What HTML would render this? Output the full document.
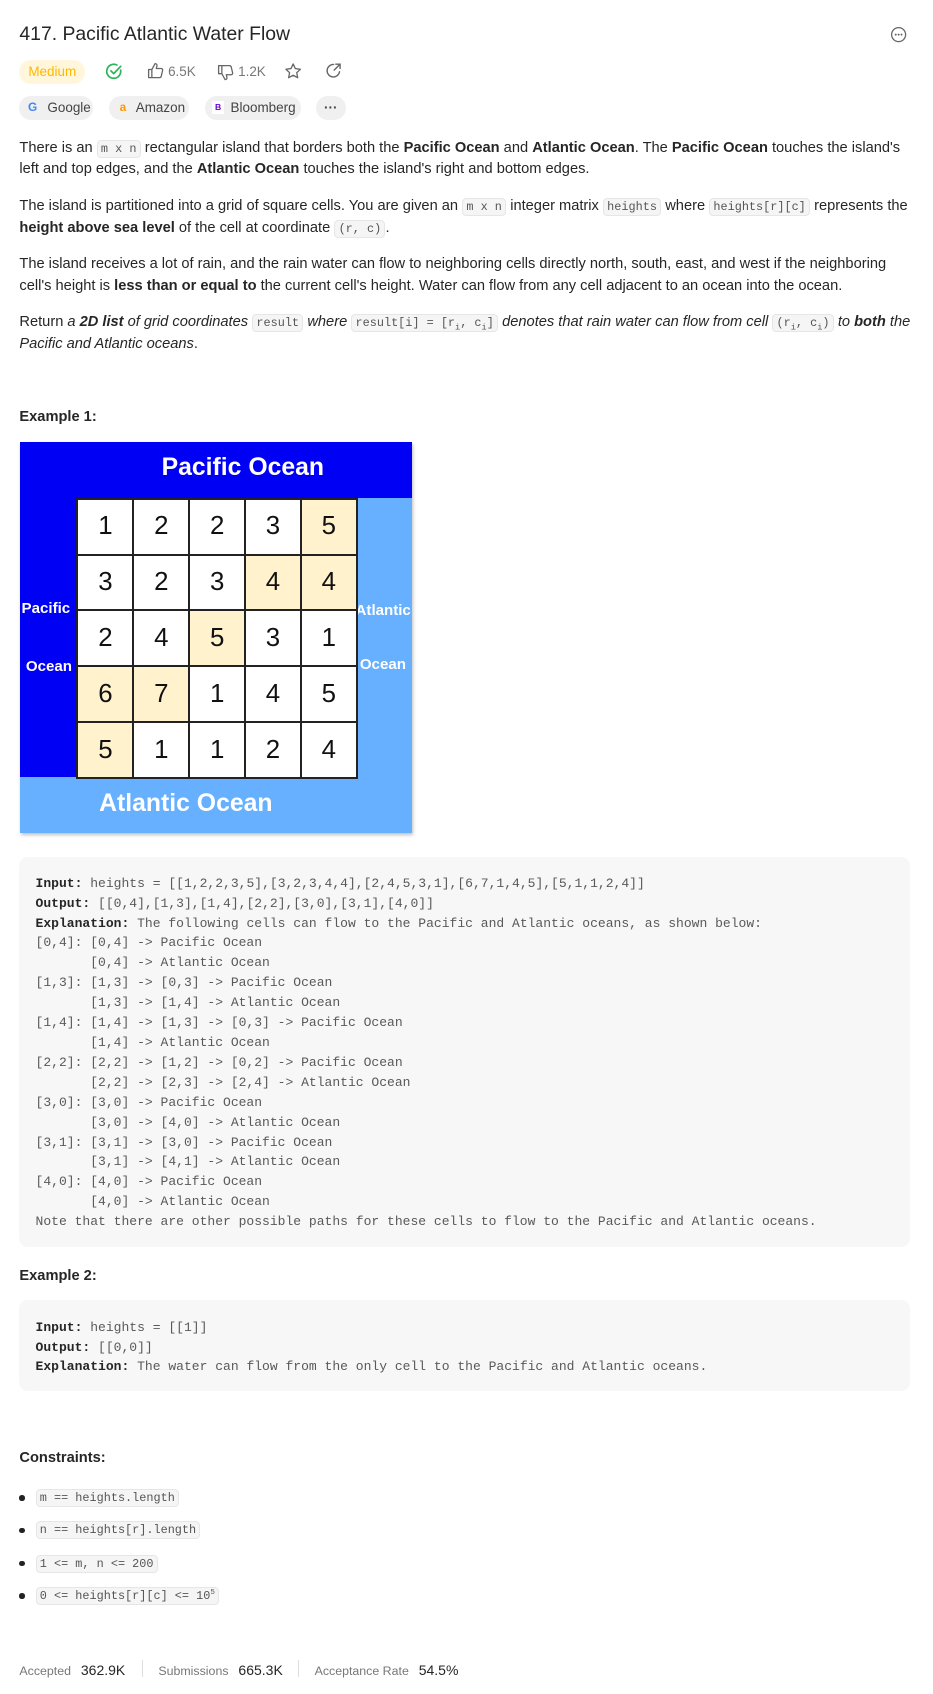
<!DOCTYPE html>
<html><head><meta charset="utf-8"><style>
html,body{margin:0;padding:0;background:#fff}
body{width:866px;height:1572px;zoom:1.07737;position:relative;overflow:hidden;font-family:"Liberation Sans",sans-serif;color:#262626}
.a{position:absolute;white-space:nowrap}
.p{font-size:13.6px;line-height:20px;left:18px}
code{font-family:"Liberation Mono",monospace;font-size:11px;background:#f5f5f5;border:1px solid #e6e6e6;border-radius:4px;padding:1px 3px;color:#555}
.pill{position:absolute;height:22px;border-radius:11px;background:#f0f0f0;font-size:12.5px;line-height:22px;color:#444}
.pre{position:absolute;left:18px;width:827px;background:#f7f7f7;border-radius:8px;font-family:"Liberation Mono",monospace;font-size:12.1px;line-height:18.47px;color:#595959;white-space:pre;box-sizing:border-box;padding-left:15px}
.pre b{color:#262626}
.h{font-weight:bold;font-size:13.6px;left:18px}
.grid{position:absolute;left:71px;top:462px;border-collapse:collapse}
.grid td{width:50px;height:50px;border:2px solid #222;text-align:center;font-size:24px;background:#fff;padding:0;color:#111}
.grid td.y{background:#fff2cc}
.li{position:absolute;left:18px;font-size:13px}
.li:before{content:"";position:absolute;left:0;top:7px;width:5px;height:5px;border-radius:50%;background:#222}
.li code{margin-left:15px;font-size:11px}
</style></head><body>
<div class="a" style="left:18px;top:21px;font-size:18px;color:#262626">417. Pacific Atlantic Water Flow</div>
<svg class="a" style="left:826px;top:24px" width="16" height="16" viewBox="0 0 16 16"><circle cx="8" cy="8" r="6.5" fill="none" stroke="#666" stroke-width="1.2"/><circle cx="5.3" cy="8" r=".9" fill="#666"/><circle cx="8" cy="8" r=".9" fill="#666"/><circle cx="10.7" cy="8" r=".9" fill="#666"/></svg>

<div class="pill" style="left:18px;top:56px;width:61px;background:#fff6dc;color:#ffb800;text-align:center">Medium</div>
<svg class="a" style="left:97px;top:58px" width="17" height="17" viewBox="0 0 17 17"><path d="M14.5 7.5A6.5 6.5 0 1 1 11 2.8" fill="none" stroke="#2db55d" stroke-width="1.6" stroke-linecap="round"/><path d="M5.5 8.2l2.6 2.6 6.5-6.8" fill="none" stroke="#2db55d" stroke-width="1.6" stroke-linecap="round" stroke-linejoin="round"/></svg>
<svg class="a" style="left:136px;top:58px" width="16" height="16" viewBox="0 0 16 16"><path d="M1.5 7h3v7.5h-3z M4.5 7l3-5.5c1.3 0 2 .8 1.7 2.2L8.6 6h4.5c1 0 1.6.9 1.4 1.8l-1.3 5.5c-.2.8-.8 1.2-1.5 1.2H4.5" fill="none" stroke="#666" stroke-width="1.2" stroke-linejoin="round"/></svg>
<div class="a" style="left:156px;top:59px;font-size:12.5px;color:#777">6.5K</div>
<svg class="a" style="left:201px;top:59px" width="16" height="16" viewBox="0 0 16 16"><path d="M1.5 1.5h3V9h-3z M4.5 9l3 5.5c1.3 0 2-.8 1.7-2.2L8.6 10h4.5c1 0 1.6-.9 1.4-1.8L13.2 2.7c-.2-.8-.8-1.2-1.5-1.2H4.5" fill="none" stroke="#666" stroke-width="1.2" stroke-linejoin="round"/></svg>
<div class="a" style="left:221px;top:59px;font-size:12.5px;color:#777">1.2K</div>
<svg class="a" style="left:264px;top:58px" width="17" height="17" viewBox="0 0 17 17"><path d="M8.5 1.8l2 4.3 4.7.6-3.4 3.2.9 4.7-4.2-2.3-4.2 2.3.9-4.7L1.8 6.7l4.7-.6z" fill="none" stroke="#666" stroke-width="1.2" stroke-linejoin="round"/></svg>
<svg class="a" style="left:302px;top:58px" width="16" height="16" viewBox="0 0 16 16"><path d="M13.5 9A5.8 5.8 0 1 1 8 2.3" fill="none" stroke="#666" stroke-width="1.3" stroke-linecap="round"/><path d="M10 2h4v4M14 2L8.5 7.5" fill="none" stroke="#666" stroke-width="1.3" stroke-linecap="round"/></svg>

<div class="pill" style="left:18px;top:89px;width:68px"><span style="position:absolute;left:8px;font-weight:bold;font-size:11px;color:#4285f4">G</span><span style="position:absolute;left:26px">Google</span></div>
<div class="pill" style="left:101px;top:89px;width:74px"><span style="position:absolute;left:10px;font-weight:bold;font-size:11px;color:#f90">a</span><span style="position:absolute;left:25px">Amazon</span></div>
<div class="pill" style="left:190px;top:89px;width:89px"><span style="position:absolute;left:7px;top:5px;width:11px;height:12px;background:#fff;font-size:8px;line-height:12px;text-align:center;color:#6a00d8;font-weight:bold">B</span><span style="position:absolute;left:24px">Bloomberg</span></div>
<div class="pill" style="left:293px;top:89px;width:28px;text-align:center;font-weight:bold">···</div>

<div class="a p" style="top:128px">There is an <code>m x n</code> rectangular island that borders both the <b>Pacific Ocean</b> and <b>Atlantic Ocean</b>. The <b>Pacific Ocean</b> touches the island's</div>
<div class="a p" style="top:148px">left and top edges, and the <b>Atlantic Ocean</b> touches the island's right and bottom edges.</div>
<div class="a p" style="top:182px">The island is partitioned into a grid of square cells. You are given an <code>m x n</code> integer matrix <code>heights</code> where <code>heights[r][c]</code> represents the</div>
<div class="a p" style="top:202px"><b>height above sea level</b> of the cell at coordinate <code>(r, c)</code>.</div>
<div class="a p" style="top:236px">The island receives a lot of rain, and the rain water can flow to neighboring cells directly north, south, east, and west if the neighboring</div>
<div class="a p" style="top:256px">cell's height is <b>less than or equal to</b> the current cell's height. Water can flow from any cell adjacent to an ocean into the ocean.</div>
<div class="a p" style="top:290px">Return <i>a <b>2D list</b> of grid coordinates</i> <code>result</code> <i>where</i> <code>result[i] = [r<sub style="font-size:8px">i</sub>, c<sub style="font-size:8px">i</sub>]</code> <i>denotes that rain water can flow from cell</i> <code>(r<sub style="font-size:8px">i</sub>, c<sub style="font-size:8px">i</sub>)</code> <i>to <b>both</b> the</i></div>
<div class="a p" style="top:310px"><i>Pacific and Atlantic oceans</i>.</div>

<div class="a h" style="top:380px">Example 1:</div>
<div class="a" style="left:19px;top:410px;width:363px;height:363px;background:#66b0ff;box-shadow:1px 2px 3px rgba(0,0,0,.25)"></div>
<div class="a" style="left:19px;top:410px;width:363px;height:52px;background:#0000f5"></div>
<div class="a" style="left:19px;top:410px;width:52px;height:311px;background:#0000f5"></div>
<div class="a" style="left:150px;top:421px;font-size:23px;font-weight:bold;color:#fff">Pacific Ocean</div>
<div class="a" style="left:92px;top:733px;font-size:23px;font-weight:bold;color:#fff">Atlantic Ocean</div>
<div class="a" style="left:20px;top:557px;font-size:14px;font-weight:bold;color:#fff">Pacific</div>
<div class="a" style="left:24px;top:611px;font-size:14px;font-weight:bold;color:#fff">Ocean</div>
<div class="a" style="left:330px;top:559px;font-size:14px;font-weight:bold;color:#fff">Atlantic</div>
<div class="a" style="left:334px;top:609px;font-size:14px;font-weight:bold;color:#fff">Ocean</div>
<table class="grid">
<tr><td>1</td><td>2</td><td>2</td><td>3</td><td class="y">5</td></tr>
<tr><td>3</td><td>2</td><td>3</td><td class="y">4</td><td class="y">4</td></tr>
<tr><td>2</td><td>4</td><td class="y">5</td><td>3</td><td>1</td></tr>
<tr><td class="y">6</td><td class="y">7</td><td>1</td><td>4</td><td>5</td></tr>
<tr><td class="y">5</td><td>1</td><td>1</td><td>2</td><td>4</td></tr>
</table>

<div class="pre" style="top:795px;height:362px;padding-top:16px"><b>Input:</b> heights = [[1,2,2,3,5],[3,2,3,4,4],[2,4,5,3,1],[6,7,1,4,5],[5,1,1,2,4]]
<b>Output:</b> [[0,4],[1,3],[1,4],[2,2],[3,0],[3,1],[4,0]]
<b>Explanation:</b> The following cells can flow to the Pacific and Atlantic oceans, as shown below:
[0,4]: [0,4] -&gt; Pacific Ocean 
       [0,4] -&gt; Atlantic Ocean
[1,3]: [1,3] -&gt; [0,3] -&gt; Pacific Ocean 
       [1,3] -&gt; [1,4] -&gt; Atlantic Ocean
[1,4]: [1,4] -&gt; [1,3] -&gt; [0,3] -&gt; Pacific Ocean 
       [1,4] -&gt; Atlantic Ocean
[2,2]: [2,2] -&gt; [1,2] -&gt; [0,2] -&gt; Pacific Ocean 
       [2,2] -&gt; [2,3] -&gt; [2,4] -&gt; Atlantic Ocean
[3,0]: [3,0] -&gt; Pacific Ocean 
       [3,0] -&gt; [4,0] -&gt; Atlantic Ocean
[3,1]: [3,1] -&gt; [3,0] -&gt; Pacific Ocean 
       [3,1] -&gt; [4,1] -&gt; Atlantic Ocean
[4,0]: [4,0] -&gt; Pacific Ocean 
       [4,0] -&gt; Atlantic Ocean
Note that there are other possible paths for these cells to flow to the Pacific and Atlantic oceans.</div>

<div class="a h" style="top:1177px">Example 2:</div>
<div class="pre" style="top:1207px;height:84px;padding-top:16px"><b>Input:</b> heights = [[1]]
<b>Output:</b> [[0,0]]
<b>Explanation:</b> The water can flow from the only cell to the Pacific and Atlantic oceans.</div>

<div class="a h" style="top:1346px">Constraints:</div>
<div class="a li" style="top:1381px"><code>m == heights.length</code></div>
<div class="a li" style="top:1411px"><code>n == heights[r].length</code></div>
<div class="a li" style="top:1442px"><code>1 &lt;= m, n &lt;= 200</code></div>
<div class="a li" style="top:1472px"><code>0 &lt;= heights[r][c] &lt;= 10<sup style="font-size:7px">5</sup></code></div>

<div class="a" style="left:18px;top:1543px;font-size:11.5px;color:#777">Accepted <span style="font-size:13px;color:#262626;margin-left:6px">362.9K</span></div>
<div class="a" style="left:132px;top:1541px;width:1px;height:16px;background:#ddd"></div>
<div class="a" style="left:147px;top:1543px;font-size:11.5px;color:#777">Submissions <span style="font-size:13px;color:#262626;margin-left:6px">665.3K</span></div>
<div class="a" style="left:277px;top:1541px;width:1px;height:16px;background:#ddd"></div>
<div class="a" style="left:292px;top:1543px;font-size:11.5px;color:#777">Acceptance Rate <span style="font-size:13px;color:#262626;margin-left:6px">54.5%</span></div>
</body></html>
